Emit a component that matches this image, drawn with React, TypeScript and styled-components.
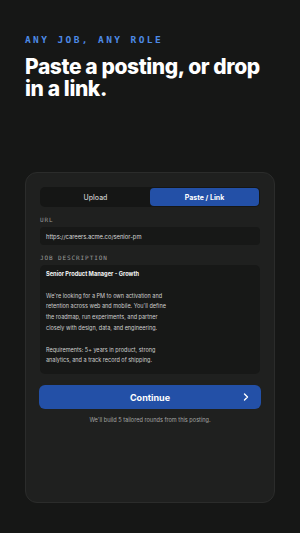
import React from 'react';
import styled, { createGlobalStyle } from 'styled-components';

const GlobalStyle = createGlobalStyle`
  html, body {
    margin: 0;
    padding: 0;
    background-color: #161716;
  }
  * {
    box-sizing: border-box;
  }
`;

const Page = styled.div`
  width: 300px;
  min-height: 533px;
  padding: 34px 25px 30px;
  background-color: #161716;
  font-family: Inter, 'Liberation Sans', sans-serif;
  color: #f2f2f2;
`;

const Eyebrow = styled.div`
  font-family: 'DejaVu Sans Mono', monospace;
  font-size: 9.5px;
  font-weight: bold;
  letter-spacing: 2.4px;
  color: #4d8ae6;
  line-height: 12px;
`;

const Title = styled.h1`
  margin: 10px 0 0;
  font-size: 21px;
  line-height: 22px;
  font-weight: 800;
  letter-spacing: -0.4px;
  color: #ffffff;
`;

const TitleLine = styled.span`
  display: block;
`;

const Card = styled.div`
  margin-top: 72px;
  height: 331px;
  padding: 14px;
  border: 1px solid #2b2c2b;
  border-radius: 12px;
  background-color: #1f201f;
  display: flex;
  flex-direction: column;
`;

const Tabs = styled.div`
  display: grid;
  grid-template-columns: 1fr 1fr;
  padding: 1px;
  border-radius: 5px;
  background-color: #151615;
`;

interface TabProps {
  readonly active?: boolean;
}

const Tab = styled.div<TabProps>`
  height: 18px;
  display: flex;
  align-items: center;
  justify-content: center;
  border-radius: 4px;
  font-size: 7px;
  font-weight: ${(props) => (props.active ? 700 : 500)};
  color: ${(props) => (props.active ? '#ffffff' : '#c9c9c9')};
  background-color: ${(props) => (props.active ? '#2350a7' : 'transparent')};
`;

const Label = styled.div`
  margin: 9px 0 3px;
  font-family: 'DejaVu Sans Mono', monospace;
  font-size: 6px;
  line-height: 8px;
  letter-spacing: 0.9px;
  color: #9a9b9a;
`;

const Input = styled.div`
  height: 18px;
  padding: 0 6px;
  display: flex;
  align-items: center;
  border-radius: 4px;
  background-color: #171817;
  font-size: 5.8px;
  color: #d8d8d8;
`;

const TextArea = styled.div`
  height: 109px;
  padding: 4px 6px;
  border-radius: 5px;
  background-color: #171817;
  font-family: 'Liberation Sans Narrow', 'Arial Narrow', Inter, sans-serif;
  font-size: 5.5px;
  line-height: 10.8px;
  color: #cfcfcf;
  white-space: pre-line;
`;

const PostingTitle = styled.div`
  font-family: Inter, 'Liberation Sans', sans-serif;
  font-size: 5.7px;
  font-weight: 700;
  color: #f4f4f4;
`;

const Continue = styled.button`
  position: relative;
  margin: 11px -1px 0;
  height: 24px;
  border: none;
  border-radius: 6px;
  background-color: #2350a7;
  color: #ffffff;
  font-family: inherit;
  font-size: 9px;
  font-weight: 700;
  display: flex;
  align-items: center;
  justify-content: center;
`;

const Chevron = styled.svg`
  position: absolute;
  right: 10px;
  top: 7px;
`;

const Caption = styled.div`
  margin-top: 8px;
  text-align: center;
  font-size: 5.6px;
  color: #a4a5a4;
`;

const description = `We're looking for a PM to own activation and
retention across web and mobile. You'll define
the roadmap, run experiments, and partner
closely with design, data, and engineering.

Requirements: 5+ years in product, strong
analytics, and a track record of shipping.`;

export default function App(): JSX.Element {
  return (
    <>
      <GlobalStyle />
      <Page>
        <Eyebrow>ANY JOB, ANY ROLE</Eyebrow>
        <Title>
          <TitleLine>Paste a posting, or drop</TitleLine>
          <TitleLine>in a link.</TitleLine>
        </Title>
        <Card>
          <Tabs>
            <Tab>Upload</Tab>
            <Tab active>Paste / Link</Tab>
          </Tabs>
          <Label>URL</Label>
          <Input>https://careers.acme.co/senior-pm</Input>
          <Label>JOB DESCRIPTION</Label>
          <TextArea>
            <PostingTitle>Senior Product Manager - Growth</PostingTitle>
            {'\n'}
            {description}
          </TextArea>
          <Continue>
            Continue
            <Chevron width="10" height="10" viewBox="0 0 10 10">
              <path d="M3.5 2 L6.5 5 L3.5 8" fill="none" stroke="#fff" strokeWidth="1.4" strokeLinecap="round" strokeLinejoin="round" />
            </Chevron>
          </Continue>
          <Caption>We'll build 5 tailored rounds from this posting.</Caption>
        </Card>
      </Page>
    </>
  );
}
